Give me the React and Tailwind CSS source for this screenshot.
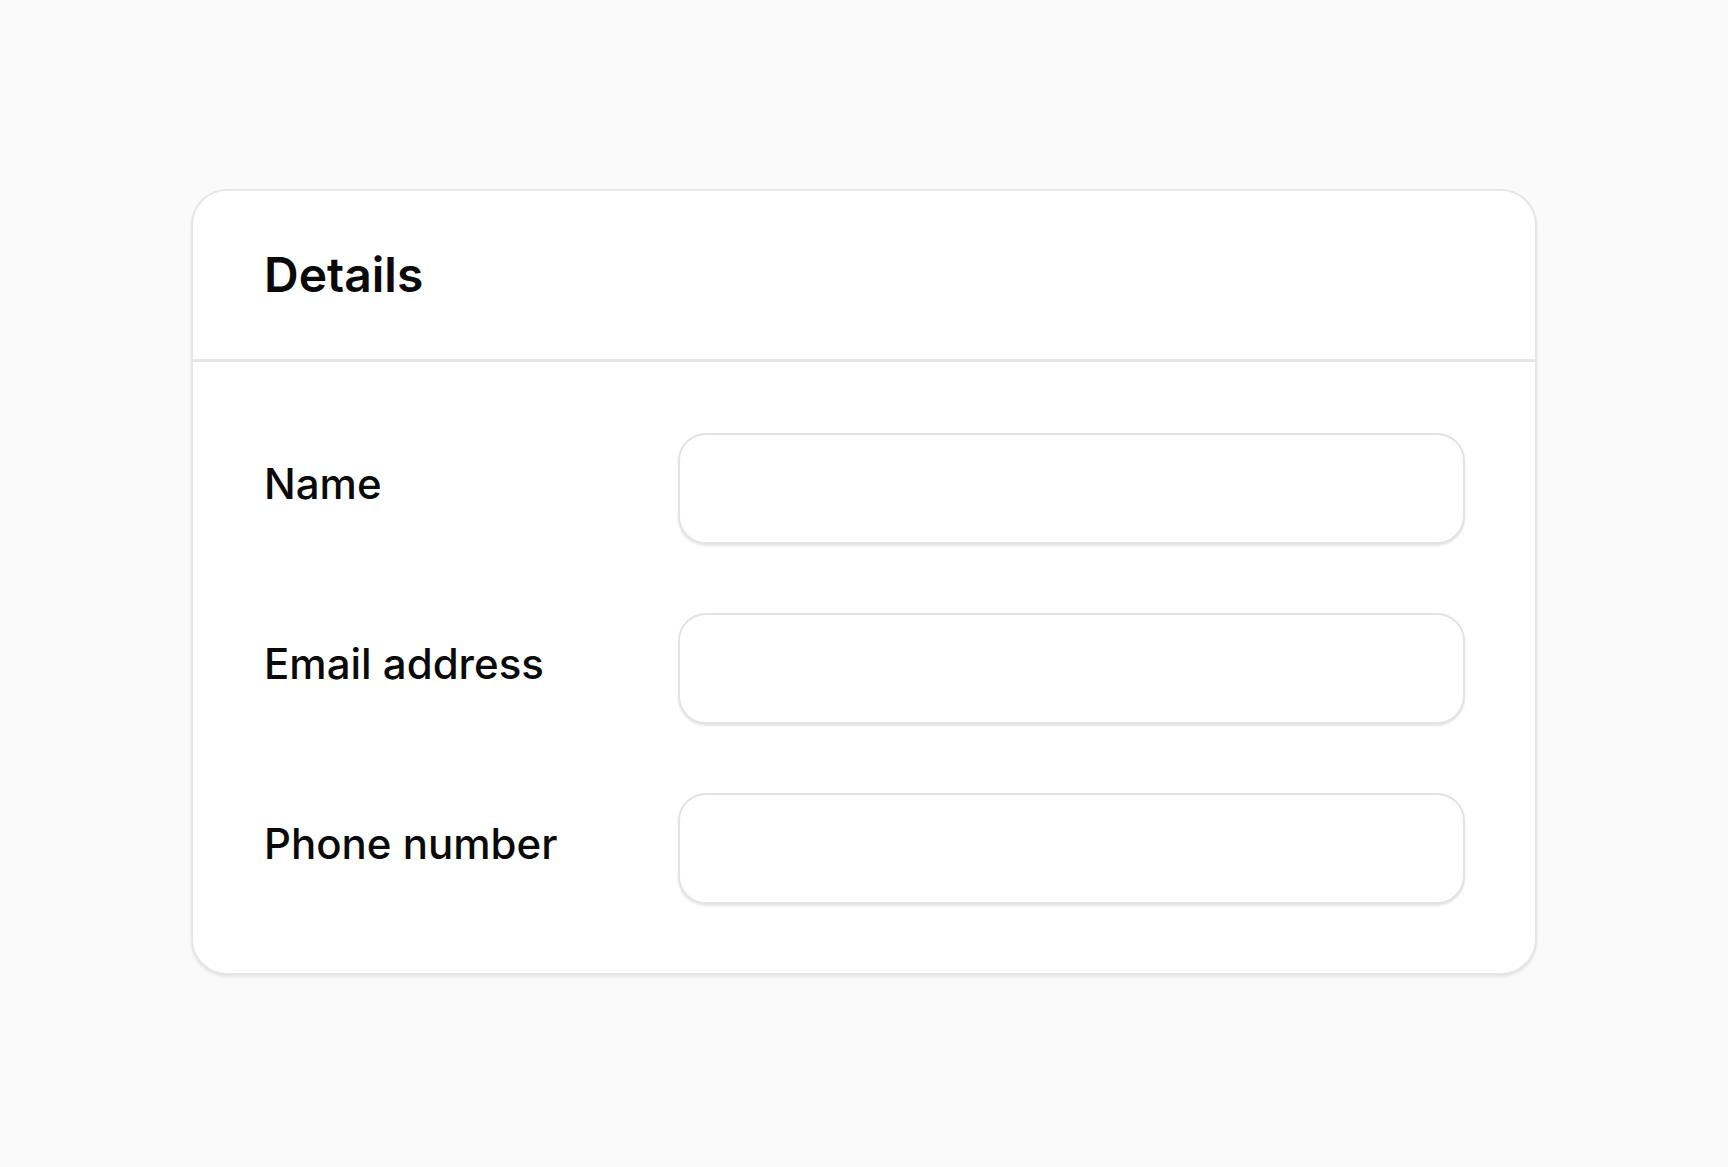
import React from "react";

const fields = [
  { id: "name", label: "Name", type: "text" },
  { id: "email", label: "Email address", type: "email" },
  { id: "phone", label: "Phone number", type: "tel" },
];

const App = () => {
  return (
    <div
      className="min-h-screen pb-1 bg-[#fafafa] flex items-center justify-center"
      style={{ fontFamily: "Inter, 'Noto Sans', sans-serif" }}
    >
      <div className="w-[1346px] bg-white border-2 border-[#e6e6e6] rounded-[36px] shadow-[0_2px_3px_rgba(0,0,0,0.09)]">
        {/* Header */}
        <div className="h-[171px] flex items-center px-[71px] border-b-[3px] border-[#e5e5e5]">
          <h2 className="text-[48px] font-semibold text-[#0a0a0a]">
            Details
          </h2>
        </div>

        {/* Form rows */}
        <div className="px-[70px] pt-[71px] pb-[69px] flex flex-col gap-[69px]">
          {fields.map((field) => (
            <div key={field.id} className="flex items-center">
              <label
                htmlFor={field.id}
                className="w-[415px] pl-px text-[42px] font-medium text-[#0a0a0a] -mt-[10px]"
              >
                {field.label}
              </label>
              <input
                id={field.id}
                type={field.type}
                className="flex-1 h-[111px] px-6 bg-white border-[2.5px] border-[#e3e3e3] rounded-[28px] shadow-[0_2px_2px_rgba(0,0,0,0.1)] outline-none text-[36px]"
              />
            </div>
          ))}
        </div>
      </div>
    </div>
  );
};

export default App;
